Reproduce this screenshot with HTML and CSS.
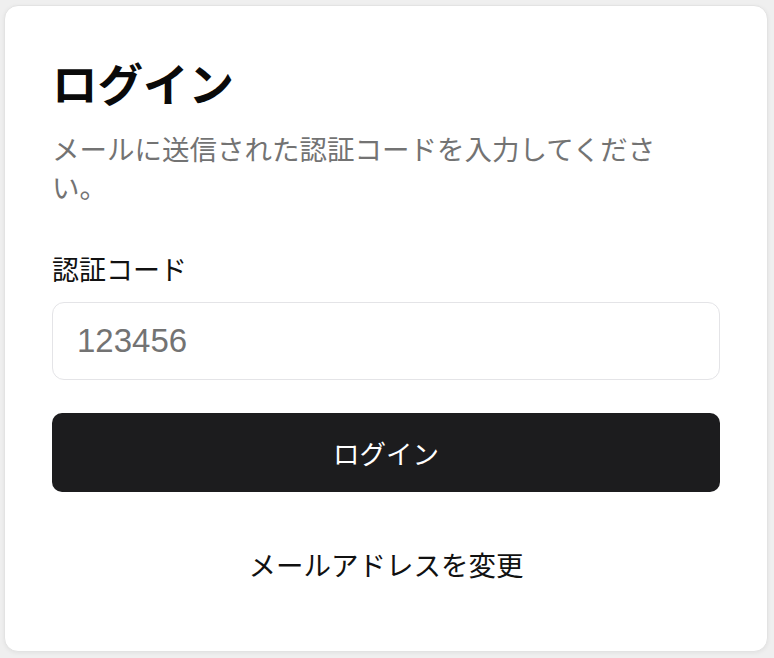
FILE: index.html
```html
<!DOCTYPE html>
<html lang="ja">
<head>
<meta charset="utf-8">
<title>ログイン</title>
<link rel="stylesheet" href="styles.css">
</head>
<body>
<div class="page">
  <main class="card">
    <h1 class="title">ログイン</h1>
    <p class="desc">メールに送信された認証コードを入力してください。</p>
    <form class="form">
      <label class="label" for="code">認証コード</label>
      <input class="input" id="code" type="text" placeholder="123456">
      <button class="btn" type="button">ログイン</button>
    </form>
    <a class="link" href="#">メールアドレスを変更</a>
  </main>
</div>
</body>
</html>
```
FILE: styles.css
```css
* { box-sizing: border-box; }
html, body { margin: 0; padding: 0; }
body {
  background: #efefef;
  font-family: "Noto Sans CJK JP", "Noto Sans", sans-serif;
  color: #0a0a0a;
}
.page {
  height: 100vh;
  padding: 5px 6px 6px 4px;
  display: flex;
}
.card {
  flex: 1;
  background: #ffffff;
  border: 1px solid #e3e3e3;
  border-radius: 14px;
  box-shadow: 0 1px 4px rgba(0, 0, 0, 0.06);
  padding: 50px 47px 0;
  display: flex;
  flex-direction: column;
}
.title {
  margin: 0;
  font-size: 45.5px;
  line-height: 52px;
  font-weight: 700;
  color: #0a0a0a;
}
.desc {
  margin: 22px 0 0;
  max-width: 640px;
  font-size: 27.5px;
  line-height: 37.5px;
  color: #737373;
}
.form {
  display: flex;
  flex-direction: column;
  margin-top: 45px;
}
.label {
  font-size: 27px;
  line-height: 37px;
  color: #111111;
}
.input {
  margin-top: 15px;
  height: 78px;
  border: 1.5px solid #e4e4e7;
  border-radius: 12px;
  padding: 0 24px;
  font-family: "Liberation Sans", "Noto Sans", sans-serif;
  font-size: 33px;
  color: #0a0a0a;
  background: #ffffff;
  outline: none;
}
.input::placeholder { color: #737373; }
.btn {
  margin-top: 33px;
  height: 79px;
  border: none;
  border-radius: 10px;
  background: #1c1c1e;
  color: #ffffff;
  font-family: "Noto Sans CJK JP", "Noto Sans", sans-serif;
  font-size: 26.5px;
  cursor: pointer;
}
.link {
  margin-top: 54px;
  align-self: center;
  font-size: 27.5px;
  line-height: 37px;
  color: #111111;
  text-decoration: none;
}
```
